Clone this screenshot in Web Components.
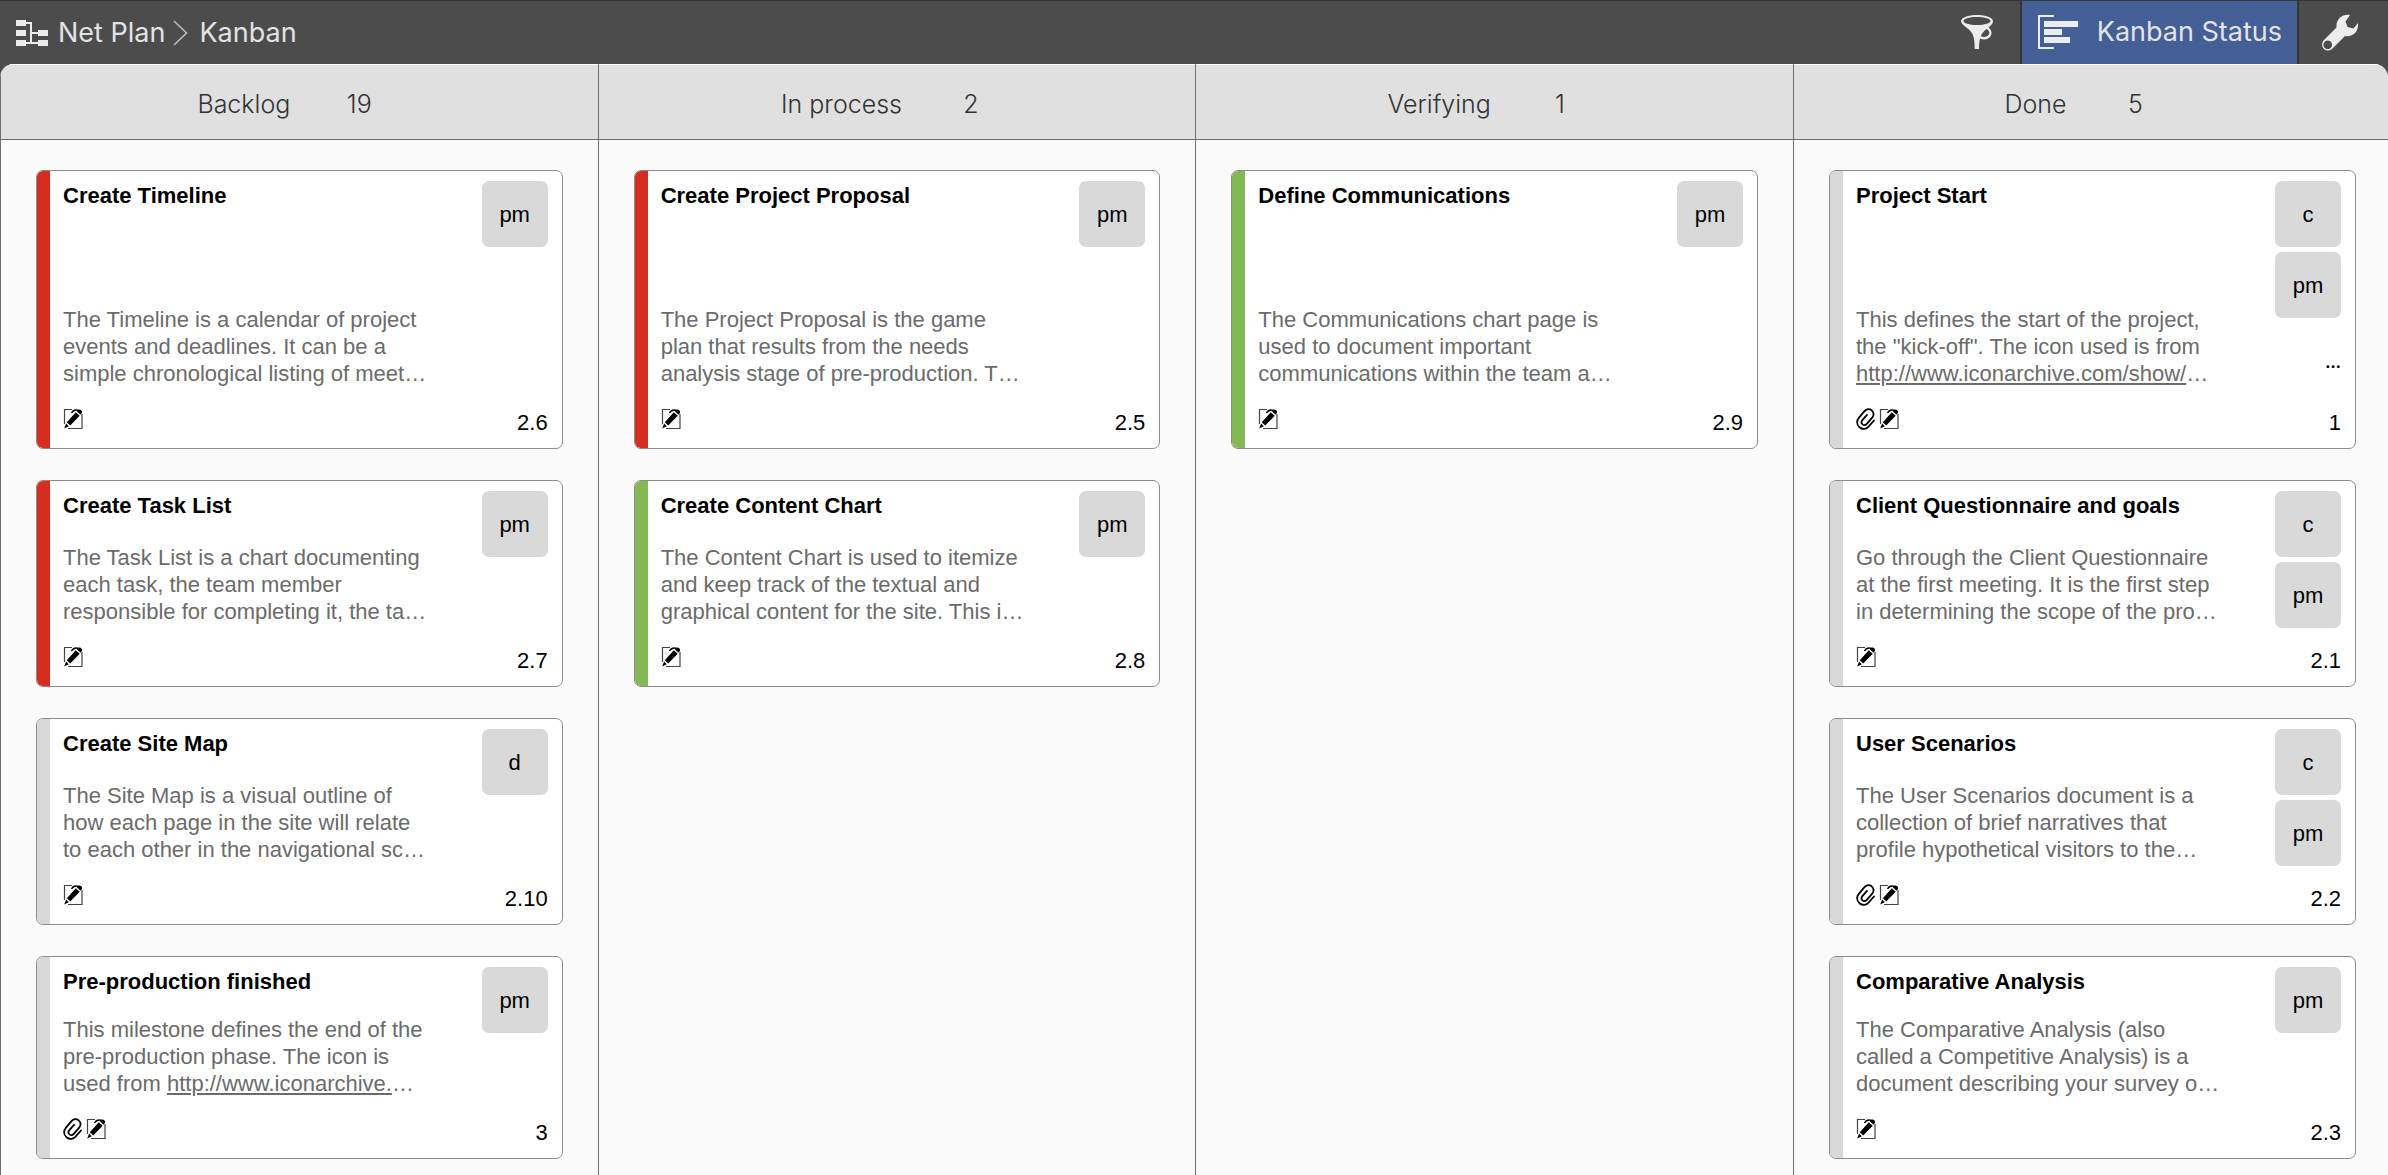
<!DOCTYPE html>
<html lang="en">
<head>
<meta charset="utf-8">
<title>Net Plan – Kanban</title>
<style>
  html, body { margin: 0; height: 100%; }
  body {
    background: #4c4c4c;
    font-family: "Liberation Sans", Arial, sans-serif;
    font-size: 22px;
    line-height: 27px;
    color: #000;
    overflow: hidden;
  }
</style>
</head>
<body>
<kanban-app>
  <tool-bar slot="toolbar"></tool-bar>
  <kanban-column heading="Backlog" count="19">
    <task-card heading="Create Timeline" number="2.6" tone="red" size="tall" people="pm">The Timeline is a calendar of project<br>events and deadlines. It can be a<br>simple chronological listing of meet…</task-card>
    <task-card heading="Create Task List" number="2.7" tone="red" people="pm">The Task List is a chart documenting<br>each task, the team member<br>responsible for completing it, the ta…</task-card>
    <task-card heading="Create Site Map" number="2.10" people="d">The Site Map is a visual outline of<br>how each page in the site will relate<br>to each other in the navigational sc…</task-card>
    <task-card heading="Pre-production finished" number="3" size="short" people="pm" attachment>This milestone defines the end of the<br>pre-production phase. The icon is<br>used from <a href="http://www.iconarchive.com/">http://www.iconarchive.</a>…</task-card>
  </kanban-column>
  <kanban-column heading="In process" count="2">
    <task-card heading="Create Project Proposal" number="2.5" tone="red" size="tall" people="pm">The Project Proposal is the game<br>plan that results from the needs<br>analysis stage of pre-production. T…</task-card>
    <task-card heading="Create Content Chart" number="2.8" tone="green" people="pm">The Content Chart is used to itemize<br>and keep track of the textual and<br>graphical content for the site. This i…</task-card>
  </kanban-column>
  <kanban-column heading="Verifying" count="1">
    <task-card heading="Define Communications" number="2.9" tone="green" size="tall" people="pm">The Communications chart page is<br>used to document important<br>communications within the team a…</task-card>
  </kanban-column>
  <kanban-column heading="Done" count="5">
    <task-card heading="Project Start" number="1" size="tall" people="c pm" attachment more>This defines the start of the project,<br>the "kick-off". The icon used is from<br><a href="http://www.iconarchive.com/show/">http://www.iconarchive.com/show/</a>…</task-card>
    <task-card heading="Client Questionnaire and goals" number="2.1" people="c pm">Go through the Client Questionnaire<br>at the first meeting. It is the first step<br>in determining the scope of the pro…</task-card>
    <task-card heading="User Scenarios" number="2.2" people="c pm" attachment>The User Scenarios document is a<br>collection of brief narratives that<br>profile hypothetical visitors to the…</task-card>
    <task-card heading="Comparative Analysis" number="2.3" size="short" people="pm">The Comparative Analysis (also<br>called a Competitive Analysis) is a<br>document describing your survey o…</task-card>
  </kanban-column>
</kanban-app>

<script>
class KanbanApp extends HTMLElement {
  constructor() {
    super();
    this.attachShadow({ mode: 'open' }).innerHTML = `
      <style>
        :host { display: flex; flex-direction: column; height: 100vh; }
        main {
          flex: 1; min-height: 0; display: grid;
          grid-template-columns: repeat(3, minmax(0, 1fr)) calc(25% - 2px);
          background: #fafafa; border-radius: 14px 14px 0 0; overflow: hidden;
          box-sizing: border-box;
        }
      </style>
      <slot name="toolbar"></slot>
      <main><slot></slot></main>`;
  }
}

class ToolBar extends HTMLElement {
  constructor() {
    super();
    this.attachShadow({ mode: 'open' }).innerHTML = `
      <style>
        :host {
          display: flex; justify-content: space-between; height: 64px; box-sizing: border-box;
          border-top: 1px solid #333; background: #4c4c4c; color: #e3e3e3;
          font-family: Inter, "Liberation Sans", sans-serif; font-size: 27px; line-height: 32px;
        }
        nav, .actions { display: flex; align-items: center; }
        nav { padding-left: 16px; }
        nav svg { flex: none; }
        a { color: inherit; text-decoration: none; }
        .plan { margin: 0 8px 0 10px; }
        .here { margin-left: 11px; }
        .actions { align-items: stretch; }
        button {
          display: flex; align-items: center; border: 0; padding: 0; margin: 0;
          background: none; color: inherit; font: inherit;
        }
        .filter { padding: 0 26px 2px; }
        .status { background: #445e96; border: solid #363636; border-width: 0 2px; padding: 0 15px 2px 16px; gap: 19px; }
        .tools { padding: 0 29px 0 22px; }
      </style>
      <nav aria-label="Breadcrumb">
        <svg width="32" height="26" viewBox="0 0 32 26" fill="#ececec" aria-hidden="true">
          <path d="M0 0h10v6H0zM0 10h10v6H0zM0 20h10v6H0zM22 10h10v6H22zM22 20h10v6H22z"/>
          <path d="M10 3h5v20M15 13h7M10 23h12" fill="none" stroke="#ececec" stroke-width="2"/>
        </svg>
        <a class="plan" href="#plan">Net Plan</a>
        <svg width="15" height="28" viewBox="0 0 15 28" fill="none" stroke="#bdbdbd" stroke-width="1.6" aria-hidden="true"><path d="M1 2l12.500 12L1 26"/></svg>
        <span class="here">Kanban</span>
      </nav>
      <div class="actions">
        <button class="filter" aria-label="Filter">
          <svg width="34" height="36" viewBox="0 0 34 36" fill="#ececec" aria-hidden="true">
            <path fill-rule="evenodd" d="M17 1C8 1 1 3.600 1 7.200C1 11 9 13.500 12.500 20C14.500 24 14.600 29 14.600 35H19C19 31 19.200 28 20 24.500C26 27 31.500 24 31.500 19C31.500 16.500 30 14.500 28.500 13.500C31 11.500 33 9.500 33 7.200C33 3.600 26 1 17 1ZM17 3C25 3 30.500 4.800 30.500 7C30.500 9.200 25 11 17 11S3.500 9.200 3.500 7C3.500 4.800 9 3 17 3ZM26.500 15C28.500 16 29.300 17.500 29.300 19C29.300 22 25.500 24 20.800 22.300C22 19 24 17 26.500 15Z"/>
          </svg>
        </button>
        <button class="status">
          <svg width="40" height="34" viewBox="0 0 40 34" fill="#ececec" aria-hidden="true">
            <path d="M16 1H1v32h15" fill="none" stroke="#ececec" stroke-width="2"/>
            <path d="M6 6h34v6H6zM6 14h18v6H6zM6 22h26v6H6z"/>
          </svg>
          <span>Kanban Status</span>
        </button>
        <button class="tools" aria-label="Settings">
          <svg width="38" height="37" viewBox="0 0 38 37" fill="#ececec" aria-hidden="true">
            <path fill-rule="evenodd" d="M29 1C22 -0.500 14.500 5 15.500 13.500L3 26C-0.500 29.500 1 36 6.500 36.500C9 36.700 10.500 35.500 12 34L24 22C32 23.500 38 17 37 9L32.500 14.500L26.500 13L24.500 7.500ZM6.800 26.500A4.300 4.300 0 1 1 6.700 26.500Z"/>
          </svg>
        </button>
      </div>`;
  }
}

class KanbanColumn extends HTMLElement {
  connectedCallback() {
    if (this.shadowRoot) return;
    this.attachShadow({ mode: 'open' }).innerHTML = `
      <style>
        :host { display: block; border-left: 1px solid #6e6e6e; --edge: 35px; }
        :host(:last-child) { --edge: 32px; }
        header {
          display: flex; justify-content: center; align-items: center; gap: 27px;
          height: 76px; box-sizing: border-box; padding-top: 4px; background: #e0e0e0;
          border-top: 1px solid #fff; border-bottom: 1px solid #6e6e6e;
          font: 300 25px/32px Inter, "Liberation Sans", sans-serif; color: #333;
        }
        h2 { margin: 0; font: inherit; }
        header span { width: 84px; text-align: center; }
        .cards { display: flex; flex-direction: column; gap: 31px; padding: 30px var(--edge) 0 35px; }
      </style>
      <header><h2></h2><span></span></header>
      <div class="cards"><slot></slot></div>`;
    this.shadowRoot.querySelector('h2').textContent = this.getAttribute('heading');
    this.shadowRoot.querySelector('span').textContent = this.getAttribute('count');
  }
}

const CLIP = `<svg width="20" height="22" viewBox="0 0 20 22" fill="none" stroke="#000" stroke-width="1.800" stroke-linecap="round" role="img" aria-label="Attachment">
  <path d="M18 12.500L13 18.200C10.500 21.300 6.500 21.700 3.500 19.200C0.500 16.500 0.500 12.700 3 9.700L8.500 3.200C10.500 0.800 13.500 0.600 15.700 2.400C18 4.400 18.200 7.300 16.200 9.600L10.800 15.800C9.500 17.300 7.800 17.400 6.500 16.400C5.200 15.200 5.200 13.600 6.400 12.200L11 6.900"/></svg>`;
const NOTE = `<svg width="20" height="22" viewBox="0 0 20 22" fill="none" role="img" aria-label="Note">
  <path d="M9 1.500H1.500V16M19 6V20.500H5" stroke="#444" stroke-width="1.200"/>
  <path d="M8.500 5C10 2.500 12.500 1.500 15.500 2.500" stroke="#000" stroke-width="1.400"/>
  <path d="M12.800 4.300L16.700 7.800L7.200 17.600L3.800 14.200ZM13.800 3.300L15.600 1.600C17.500 1 19.600 2.800 19 4.800L17.500 6.800ZM3.100 15.500L5.800 18.200L1.200 20.500Z" fill="#000"/></svg>`;

class TaskCard extends HTMLElement {
  connectedCallback() {
    if (this.shadowRoot) return;
    this.attachShadow({ mode: 'open' }).innerHTML = `
      <style>
        :host { display: block; --band: #d8d8d8; --height: 207px; }
        :host([tone="red"]) { --band: #d62d20; }
        :host([tone="green"]) { --band: #84b854; }
        :host([size="tall"]) { --height: 279px; }
        :host([size="short"]) { --height: 203px; }
        article {
          display: flex; box-sizing: border-box; min-height: var(--height);
          border: 1px solid #8c8c8c; border-radius: 7px; background: #fff; overflow: hidden;
        }
        .band { flex: none; width: 13px; background: var(--band); }
        .body { flex: 1; min-width: 0; display: flex; flex-direction: column; padding: 11px 0 18px 13px; }
        h3 { margin: 0; font-size: 22px; line-height: 27px; font-weight: bold; }
        p { margin: auto 0 21px; color: #6b6b6b; white-space: nowrap; }
        .marks { display: flex; gap: 3px; height: 22px; }
        aside { flex: none; display: flex; flex-direction: column; align-items: flex-end; gap: 5px; padding: 10px 14px 12px 0; }
        .person {
          width: 66px; height: 66px; border-radius: 7px; background: #d9d9d9;
          display: flex; align-items: center; justify-content: center;
        }
        .more { margin-top: 26px; font-family: Inter, sans-serif; font-size: 14px; font-weight: 900; }
        .number { margin-top: auto; }
        ::slotted(a) { color: inherit; text-underline-offset: 2px; text-decoration-thickness: 2px; }
      </style>
      <article>
        <div class="band"></div>
        <div class="body">
          <h3></h3>
          <p><slot></slot></p>
          <div class="marks">${this.hasAttribute('attachment') ? CLIP : ''}${NOTE}</div>
        </div>
        <aside>
          ${this.getAttribute('people').split(' ').map(p => `<span class="person">${p}</span>`).join('')}
          ${this.hasAttribute('more') ? '<span class="more">…</span>' : ''}
          <span class="number">${this.getAttribute('number')}</span>
        </aside>
      </article>`;
    this.shadowRoot.querySelector('h3').textContent = this.getAttribute('heading');
  }
}

customElements.define('kanban-app', KanbanApp);
customElements.define('tool-bar', ToolBar);
customElements.define('kanban-column', KanbanColumn);
customElements.define('task-card', TaskCard);
</script>
</body>
</html>
